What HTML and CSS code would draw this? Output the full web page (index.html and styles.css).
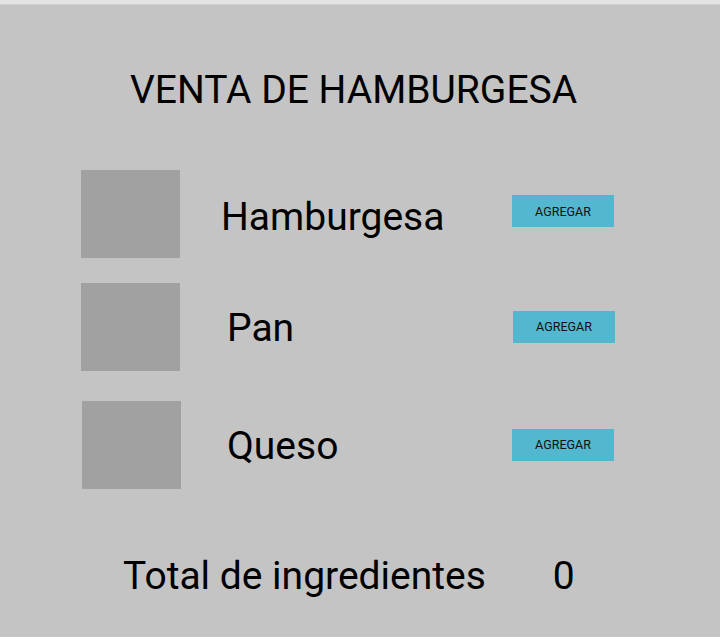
FILE: index.html
```html
<!DOCTYPE html>
<html>
<head>
<meta charset="utf-8">
<link rel="stylesheet" href="styles.css">
</head>
<body>
<div class="statusbar"></div>
<main class="screen">
  <h1 class="title">VENTA DE HAMBURGESA</h1>
  <div class="row row1">
    <div class="thumb"></div>
    <span class="label">Hamburgesa</span>
    <button class="btn">AGREGAR</button>
  </div>
  <div class="row row2">
    <div class="thumb"></div>
    <span class="label">Pan</span>
    <button class="btn">AGREGAR</button>
  </div>
  <div class="row row3">
    <div class="thumb"></div>
    <span class="label">Queso</span>
    <button class="btn">AGREGAR</button>
  </div>
  <div class="total">
    <span class="total-label">Total de ingredientes</span>
    <span class="total-value">0</span>
  </div>
</main>
</body>
</html>
```
FILE: styles.css
```css
html, body {
  margin: 0;
  padding: 0;
  background: #ffffff;
  font-family: Roboto, "Noto Sans", sans-serif;
  color: #000;
}
.statusbar {
  height: 4px;
  background: #e3e3e3;
  border-bottom: 1px solid #d2d2d2;
}
.screen {
  background: #c4c4c4;
  height: 632px;
  display: flex;
  flex-direction: column;
}
.title {
  margin: 0;
  padding-top: 62px;
  padding-left: 130px;
  font-size: 39px;
  font-weight: 400;
  line-height: 46px;
}
.row {
  display: flex;
  align-items: center;
  height: 88px;
}
.row1 { margin-top: 57px; padding-left: 81px; }
.row2 { margin-top: 25px; padding-left: 81px; }
.row3 { margin-top: 30px; padding-left: 82px; }
.thumb {
  width: 99px;
  height: 88px;
  background: #a1a1a1;
  flex: none;
}
.label {
  font-size: 39px;
  line-height: 46px;
  flex: none;
}
.row1 .label { margin-left: 41px; width: 291px; margin-top: 6px; }
.row2 .label { margin-left: 47px; width: 286px; margin-top: 2px; }
.row3 .label { margin-left: 46px; width: 284px; margin-top: 2px; }
.btn {
  width: 102px;
  height: 32px;
  background: #53b8cf;
  border: none;
  padding: 0;
  font-family: Roboto, sans-serif;
  font-size: 12.5px;
  color: #111;
  flex: none;
}
.row1 .btn { margin-top: -6px; }
.row2 .btn { margin-top: -1px; }
.row3 .btn { margin-top: -1px; margin-left: 1px; }
.total {
  display: flex;
  align-items: baseline;
  padding-left: 123px;
  margin-top: 64px;
  font-size: 39px;
  line-height: 46px;
}
.total-value { margin-left: 67px; }
```
